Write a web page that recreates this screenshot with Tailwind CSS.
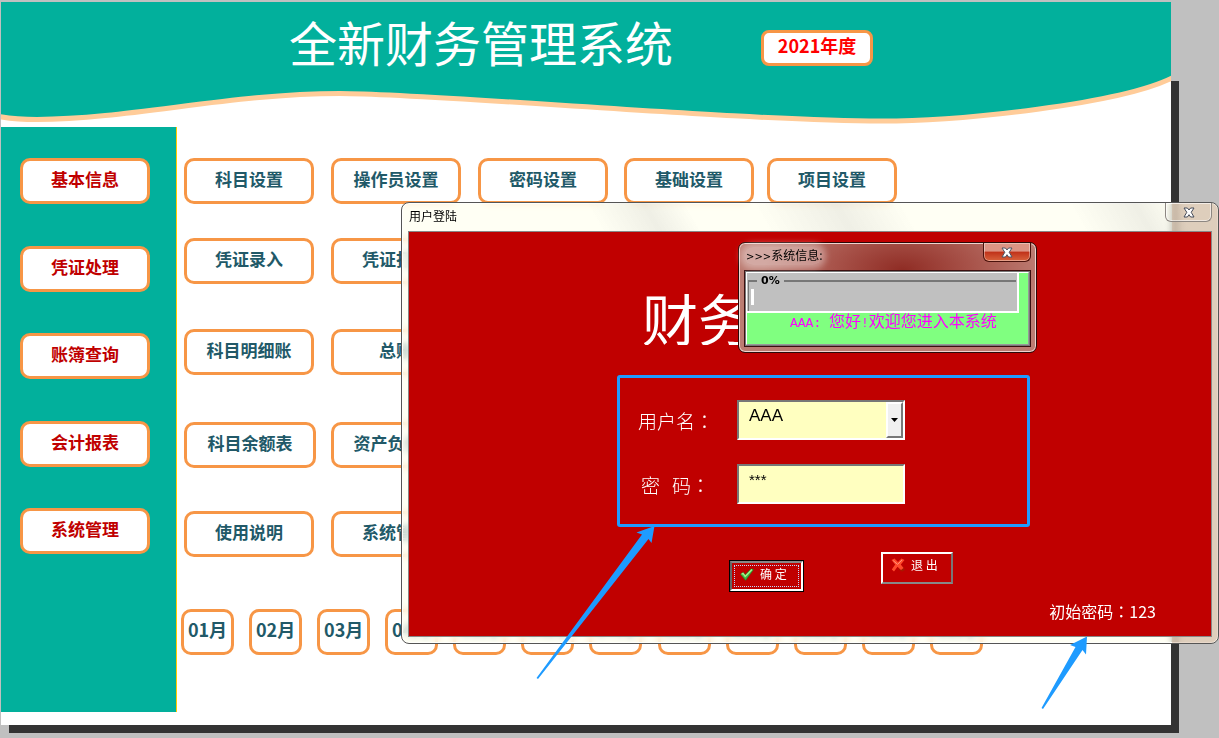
<!DOCTYPE html>
<html lang="zh-CN">
<head>
    <meta charset="UTF-8">
    <meta name="viewport" content="width=device-width, initial-scale=1.0">
    <title>全新财务管理系统</title>
    <script src="https://cdn.jsdelivr.net/npm/@tailwindcss/browser@4"></script>
</head>
<body class="relative min-h-screen overflow-hidden bg-[#c0c0c0] pt-[2px] pl-px font-['Noto_Sans_CJK_SC',sans-serif]">
    <div class="mr-12">
        <!-- Header with wave -->
        <header class="relative z-10 h-[71px]">
            <svg class="absolute inset-x-0 top-0 h-[125px] w-full" viewBox="0 0 1170 125" preserveAspectRatio="none" aria-hidden="true">
                <path fill="#02b09c" d="M0 0H1170V76.5C1120 102 960 119 880 119C740 119 430 91.5 339 91.5C230 91.5 130 117 36 117.5C24 117.5 12 117 0 114.5Z"/>
                <path fill="none" stroke="#ffcc99" stroke-width="5" d="M1172 75.5C1120 102 960 119 880 119C740 119 430 91.5 339 91.5C230 91.5 130 117 36 117.5C24 117.5 12 117 -2 114.5"/>
            </svg>
            <div class="relative flex pl-[288px] pt-4">
                <h1 class="font-['AR_PL_UKai_CN','KaiTi','Noto_Sans_CJK_SC',sans-serif] text-5xl leading-[46px] font-normal text-white">全新财务管理系统</h1>
                <div class="mt-3 ml-[88px] flex h-9 w-[112px] items-center justify-center rounded-lg border-3 border-[#f79646] bg-white pb-[6px] text-lg font-bold text-[#ff0000]">2021年度</div>
            </div>
        </header>

        <main class="flex bg-white pt-[54px] pb-[13px] shadow-[8px_8px_0_#333]">
            <!-- Sidebar -->
            <aside class="h-[585px] w-44 shrink-0 border-r border-[#ffcc00] bg-[#02b09c] pt-[31px]">
                <nav class="ml-[19px] flex h-[396px] w-[130px] flex-col justify-between text-[17px] font-bold text-[#c00000]">
                    <button class="h-[46px] rounded-[10px] border-3 border-[#f79646] bg-white pb-1">基本信息</button>
                    <button class="h-[46px] rounded-[10px] border-3 border-[#f79646] bg-white pb-1">凭证处理</button>
                    <button class="h-[46px] rounded-[10px] border-3 border-[#f79646] bg-white pb-1">账簿查询</button>
                    <button class="h-[46px] rounded-[10px] border-3 border-[#f79646] bg-white pb-1">会计报表</button>
                    <button class="h-[46px] rounded-[10px] border-3 border-[#f79646] bg-white pb-1">系统管理</button>
                </nav>
            </aside>

            <!-- Function buttons -->
            <section class="pt-[31px] text-[17px] font-bold text-[#215968]">
                <div class="flex pl-[7px]">
                    <button class="h-[46px] w-[130px] rounded-[10px] border-3 border-[#f79646] bg-white pb-1">科目设置</button>
                    <button class="ml-[17px] h-[46px] w-[130px] rounded-[10px] border-3 border-[#f79646] bg-white pb-1">操作员设置</button>
                    <button class="ml-[17px] h-[46px] w-[130px] rounded-[10px] border-3 border-[#f79646] bg-white pb-1">密码设置</button>
                    <button class="ml-4 h-[46px] w-[130px] rounded-[10px] border-3 border-[#f79646] bg-white pb-1">基础设置</button>
                    <button class="ml-[13px] h-[46px] w-[130px] rounded-[10px] border-3 border-[#f79646] bg-white pb-1">项目设置</button>
                </div>
                <div class="mt-[34px] flex gap-[17px] pl-[7px]">
                    <button class="h-[46px] w-[130px] rounded-[10px] border-3 border-[#f79646] bg-white pb-1">凭证录入</button>
                    <button class="h-[46px] w-[130px] rounded-[10px] border-3 border-[#f79646] bg-white pb-1">凭证打印</button>
                </div>
                <div class="mt-[45px] flex gap-[17px] pl-[7px]">
                    <button class="h-[46px] w-[130px] rounded-[10px] border-3 border-[#f79646] bg-white pb-1">科目明细账</button>
                    <button class="h-[46px] w-[130px] rounded-[10px] border-3 border-[#f79646] bg-white pb-1">总账</button>
                </div>
                <div class="mt-[47px] flex gap-[15px] pl-[7px]">
                    <button class="h-[46px] w-[132px] rounded-[10px] border-3 border-[#f79646] bg-white pb-1">科目余额表</button>
                    <button class="h-[46px] w-[130px] rounded-[10px] border-3 border-[#f79646] bg-white pb-1">资产负债表</button>
                </div>
                <div class="mt-[43px] flex gap-[17px] pl-[7px]">
                    <button class="h-[46px] w-[130px] rounded-[10px] border-3 border-[#f79646] bg-white pb-1">使用说明</button>
                    <button class="h-[46px] w-[130px] rounded-[10px] border-3 border-[#f79646] bg-white pb-1">系统管理</button>
                </div>
                <!-- Months -->
                <div id="months" class="mt-[52px] ml-1 flex w-[802px] justify-between"></div>
            </section>
        </main>
    </div>

    <!-- Login window -->
    <div role="dialog" aria-labelledby="loginTitle" class="absolute top-[202px] right-0 left-[401px] z-20 rounded-lg border border-[#555] bg-[#fffff0]/70 px-[6px] pb-[6px] inset-shadow-[0_0_0_1px_#fffffb] backdrop-blur-[3px]">
        <div class="pointer-events-none absolute inset-y-0 right-0 w-[46px] rounded-r-lg bg-[#cda88f]/45"></div>
        <div class="pointer-events-none absolute inset-x-0 top-0 h-7 bg-[linear-gradient(60deg,transparent_24%,#8882_31%,transparent_36%,transparent_44%,#8882_54%,transparent_62%,transparent_82%,#8882_90%,transparent_95%)]"></div>
        <div class="relative flex h-7 items-start justify-between">
            <h2 id="loginTitle" class="pt-1 pl-px text-xs leading-[18px] text-black">用户登陆</h2>
            <button aria-label="关闭" class="flex h-[19px] w-[47px] items-center justify-center rounded-b-md border border-t-0 border-[#8d8782] inset-shadow-[0_0_0_1px_#fff8]">
                <svg width="12" height="11" viewBox="0 0 12 11" aria-hidden="true"><path fill="#fff" stroke="#444a58" d="M1 1H4.4L6 3L7.6 1H11L8.2 5.3L11 10H7.6L6 7.7L4.4 10H1L3.8 5.3Z"/></svg>
            </button>
        </div>

        <div class="relative h-[406px] border border-[#888] bg-[#c00000] pt-[60px] text-white">
            <p class="mx-auto h-[53px] w-fit overflow-hidden text-[56px] leading-[50px] font-normal">财务管理系统</p>

            <form id="loginForm" class="mt-[30px] ml-[208px] flex h-[152px] w-[413px] flex-col gap-6 rounded-[3px] border-3 border-[#1e9bff] pt-[22px] pl-[18px]">
                <div class="flex items-center">
                    <label for="userName" class="w-[99px] pt-[2px] text-[19px] font-light">用户名<span class="font-['Noto_Sans_CJK_TC',sans-serif]" lang="zh-TW">：</span></label>
                    <div class="relative">
                        <select id="userName" class="block h-10 w-[168px] appearance-none border-2 border-t-[#777] border-r-white border-b-white border-l-[#777] bg-[#ffffc0] pb-2 pl-[10px] font-['Liberation_Sans',sans-serif] text-[17px] text-black">
                            <option>AAA</option>
                        </select>
                        <span class="pointer-events-none absolute top-[2px] right-[2px] flex h-9 w-[17px] items-center justify-center border-2 border-t-white border-r-[#777] border-b-[#777] border-l-white bg-[#f0f0f0]">
                            <svg width="7" height="4" viewBox="0 0 7 4" aria-hidden="true"><path d="M0 0H7L3.5 4Z"/></svg>
                        </span>
                    </div>
                </div>
                <div class="flex items-center">
                    <label for="password" class="w-[99px] pt-[2px] pl-[3px] text-[19px] font-light">密<span class="inline-block w-3"></span>码<span class="font-['Noto_Sans_CJK_TC',sans-serif]" lang="zh-TW">：</span></label>
                    <input id="password" type="text" value="***" class="h-10 w-[168px] border-2 border-t-[#777] border-r-white border-b-white border-l-[#777] bg-[#ffffc0] pb-[10px] pl-[10px] font-['Liberation_Sans',sans-serif] text-[15px] text-black">
                </div>
            </form>

            <div class="mt-[25px] ml-80 flex gap-[77px] text-xs">
                <button form="loginForm" class="mt-2 h-8 w-[75px] border border-black">
                    <span class="flex h-[30px] items-center border-2 border-t-[#888] border-r-white border-b-white border-l-[#666] p-[2px]">
                        <span class="flex h-full w-full items-center gap-[6px] border border-dotted border-[#c0d8ff] pb-[4px] pl-[5px]">
                            <svg class="shrink-0" width="14" height="13" viewBox="0 0 14 13" aria-hidden="true"><path fill="#3fb83f" stroke="#1e6e1e" stroke-width=".5" d="M.5 6.2L3.2 4.2L5.2 6.8L11 .8L13.6 1.6L5.6 12.4Z"/><path stroke="#a8f08c" stroke-width="1.4" fill="none" d="M1.6 6.2L3 5.4L5.2 8.4L12 1.6"/></svg>
                            <span class="whitespace-nowrap">确 定</span>
                        </span>
                    </span>
                </button>
                <button type="button" class="flex h-8 w-[72px] items-center gap-[6px] border-2 border-t-white border-r-[#777] border-b-[#888] border-l-white pb-[6px] pl-2">
                    <svg class="shrink-0" width="14" height="14" viewBox="0 0 14 14" aria-hidden="true"><path fill="#a81800" d="M9 8.5L12 8.5L14 12L11 13.8L7 11Z"/><path fill="#ff4a2c" d="M.5 2L3.5 .5L7 4L10.5 .5L13.5 2L9.8 6.5L12.5 10L10 12L6.5 8.8L3 13.4L.8 11.5L4.2 6.5Z"/><path fill="none" stroke="#ff9078" d="M2.2 2.6L6.6 6.4L11 2"/></svg>
                    <span class="whitespace-nowrap">退 出</span>
                </button>
            </div>

            <p class="absolute right-[55px] bottom-[13px] text-base font-normal">初始密码<span class="font-['Noto_Sans_CJK_TC',sans-serif]" lang="zh-TW">：</span>123</p>
        </div>

        <!-- System message window -->
        <div role="alertdialog" aria-labelledby="msgTitle" class="absolute top-[39px] left-[336px] h-[111px] w-[299px] rounded-[7px] border border-[#2a0a08] bg-[radial-gradient(ellipse_at_55%_25%,#8f2c24_0%,#a8534a_30%,#bc7c72_60%)] px-[5px] inset-shadow-[0_0_0_1px_#efd4cf]">
            <div class="flex h-[27px] items-start justify-between">
                <h3 id="msgTitle" class="mt-1 rounded-full bg-white/35 pl-[2px] text-xs leading-[16px] text-black shadow-[0_0_6px_4px_#ffffff59]"><span class="font-['DejaVu_Sans',sans-serif] text-[10px]">&gt;&gt;&gt;</span>系统信息:</h3>
                <button aria-label="关闭" class="flex h-[19px] w-12 items-center justify-center rounded-b-md border border-t-0 border-[#4a120c] bg-linear-to-b from-[#dd9484] from-45% via-[#c03018] via-50% to-[#d8623c] inset-shadow-[0_0_0_1px_#ffffff66]">
                    <svg width="12" height="11" viewBox="0 0 12 11" aria-hidden="true"><path fill="#fff" stroke="#4c5566" d="M1 1H4.4L6 3L7.6 1H11L8.2 5.3L11 10H7.6L6 7.7L4.4 10H1L3.8 5.3Z"/></svg>
                </button>
            </div>
            <div class="h-[77px] border border-[#3c1010] bg-[#777] p-px">
                <div class="h-full border border-t-white border-r-[#999] border-b-[#999] border-l-white bg-[#80ff80]">
                    <div class="relative mr-[9px] h-10 border-r-2 border-b-2 border-white bg-[#c0c0c0]">
                        <div class="absolute inset-x-px top-[7px] bottom-0 border-t-2 border-l border-[#777]"></div>
                        <span class="absolute top-0 left-[10px] bg-[#c0c0c0] px-1 font-['DejaVu_Sans',sans-serif] text-[11px] leading-[15px] font-bold text-black">0%</span>
                        <div class="absolute top-4 left-1 h-4 w-[3px] bg-white"></div>
                    </div>
                    <p class="pl-[43px] text-base leading-[14px] font-normal whitespace-nowrap text-[#ff00ff]"><span class="font-['Liberation_Mono',monospace] text-[13px] whitespace-pre">AAA: </span>您好<span class="font-['Liberation_Mono',monospace] text-[13px]">!</span>欢迎您进入本系统</p>
                </div>
            </div>
        </div>
    </div>

    <!-- Pointer arrows -->
    <svg class="pointer-events-none absolute top-[525px] left-[536px] z-30" width="120" height="155" viewBox="536 525 120 155" aria-hidden="true">
        <path fill="#1e9bff" d="M654.5 526L636.5 532.5L642 534.5L536.5 678L538 679L648.5 539L651.5 543Z"/>
    </svg>
    <svg class="pointer-events-none absolute top-[636px] left-[1041px] z-30" width="47" height="74" viewBox="1041 636 47 74" aria-hidden="true">
        <path fill="#1e9bff" d="M1087 636.5L1070 645L1075.5 647L1041.5 708L1043 709L1082.5 650L1086 654.5Z"/>
    </svg>

    <script>
        const months = document.getElementById('months');
        for (let i = 1; i <= 12; i++) {
            const label = String(i).padStart(2, '0') + '月';
            months.innerHTML += `<button class="h-[46px] w-[53px] rounded-[10px] border-3 border-[#f79646] bg-white pb-[6px] text-lg leading-none whitespace-nowrap">${label}</button>`;
        }
    </script>
</body>
</html>
